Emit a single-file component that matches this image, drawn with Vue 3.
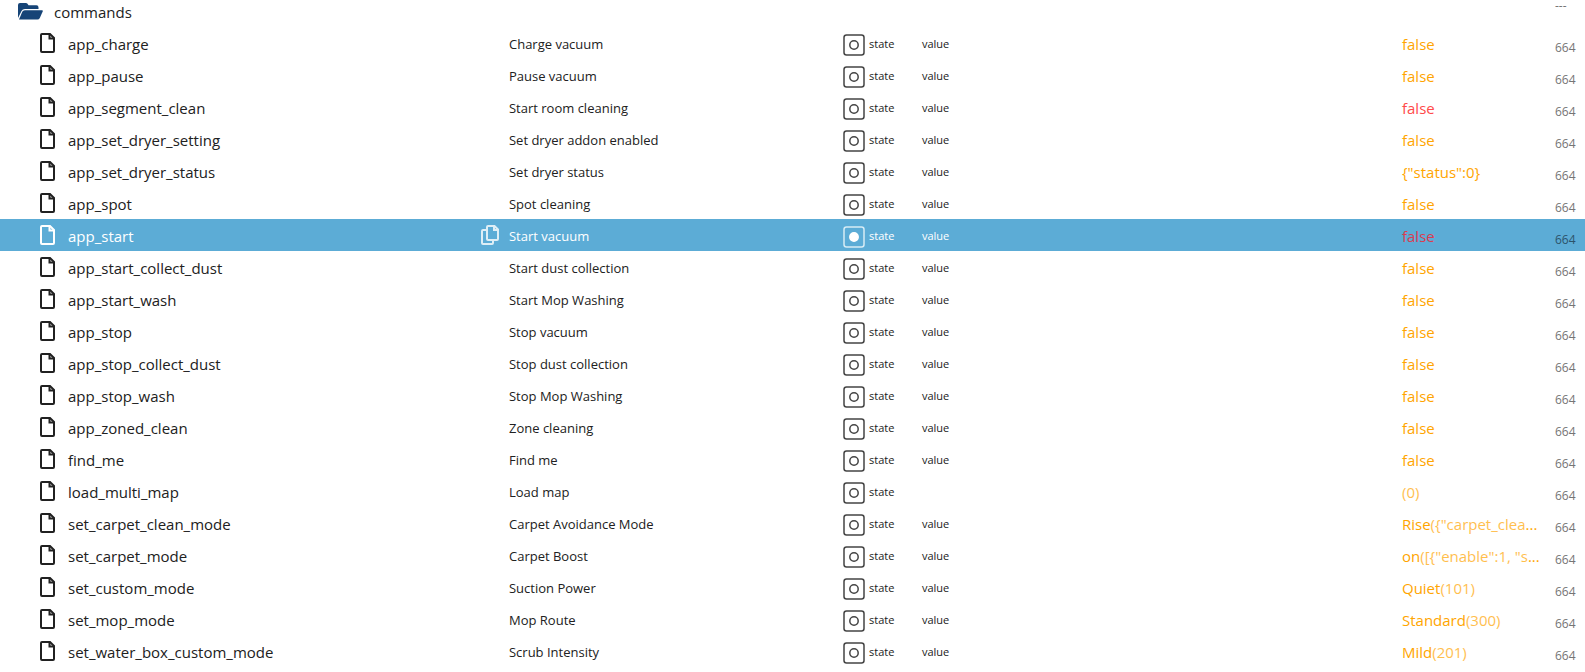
<script setup>
import { ref } from 'vue'

const selected = ref('app_start')

const rows = [
  { id: 'app_charge', desc: 'Charge vacuum', value: 'false' },
  { id: 'app_pause', desc: 'Pause vacuum', value: 'false' },
  { id: 'app_segment_clean', desc: 'Start room cleaning', value: 'false', fresh: true },
  { id: 'app_set_dryer_setting', desc: 'Set dryer addon enabled', value: 'false' },
  { id: 'app_set_dryer_status', desc: 'Set dryer status', value: '{"status":0}' },
  { id: 'app_spot', desc: 'Spot cleaning', value: 'false' },
  { id: 'app_start', desc: 'Start vacuum', value: 'false', fresh: true },
  { id: 'app_start_collect_dust', desc: 'Start dust collection', value: 'false' },
  { id: 'app_start_wash', desc: 'Start Mop Washing', value: 'false' },
  { id: 'app_stop', desc: 'Stop vacuum', value: 'false' },
  { id: 'app_stop_collect_dust', desc: 'Stop dust collection', value: 'false' },
  { id: 'app_stop_wash', desc: 'Stop Mop Washing', value: 'false' },
  { id: 'app_zoned_clean', desc: 'Zone cleaning', value: 'false' },
  { id: 'find_me', desc: 'Find me', value: 'false' },
  { id: 'load_multi_map', desc: 'Load map', raw: '(0)', noRole: true },
  { id: 'set_carpet_clean_mode', desc: 'Carpet Avoidance Mode', value: 'Rise', raw: '({"carpet_clea', cut: true },
  { id: 'set_carpet_mode', desc: 'Carpet Boost', value: 'on', raw: '([{"enable":1, "s', cut: true },
  { id: 'set_custom_mode', desc: 'Suction Power', value: 'Quiet', raw: '(101)' },
  { id: 'set_mop_mode', desc: 'Mop Route', value: 'Standard', raw: '(300)' },
  { id: 'set_water_box_custom_mode', desc: 'Scrub Intensity', value: 'Mild', raw: '(201)' },
]
</script>

<template>
  <table class="tree">
    <colgroup>
      <col class="c-name" />
      <col class="c-copy" />
      <col class="c-desc" />
      <col class="c-type" />
      <col class="c-role" />
      <col class="c-value" />
      <col class="c-acl" />
    </colgroup>
    <tbody>
      <tr class="folder">
        <td colspan="6">
          <div class="name root">
            <svg class="folder-icon" viewBox="0 0 25 17" aria-hidden="true">
              <path d="M0 15V2Q0 0 2 0H8Q9.500 0 10 1.500L10.500 2.300H18.500Q20.500 2.300 20.500 4.500V6H7Q4.500 6 3.500 8Z" />
              <path d="M6.800 7.200H24Q25.200 7.200 24.700 8.500L21.800 15Q21 16.500 19.500 16.500H1L4.300 8.800Q5 7.200 6.800 7.200Z" />
            </svg>
            <span>commands</span>
          </div>
        </td>
        <td class="acl">---</td>
      </tr>
      <tr v-for="r in rows" :key="r.id" :class="{ selected: r.id === selected }" @click="selected = r.id">
        <td>
          <div class="name">
            <svg class="file-icon" viewBox="0 0 15 20" aria-hidden="true">
              <path d="M2 1H10L14 5V18Q14 19 13 19H2Q1 19 1 18V2Q1 1 2 1Z" />
              <path d="M9.500 1.500V5.500H13.500" />
            </svg>
            <span class="label">{{ r.id }}</span>
          </div>
        </td>
        <td>
          <button v-if="r.id === selected" class="copy" type="button" aria-label="Copy">
            <svg viewBox="0 0 18 20" aria-hidden="true">
              <path d="M7 1H13.500L17 4.500V14Q17 15 16 15H7Q6 15 6 14V2Q6 1 7 1Z" />
              <path d="M13 1.500V5H16.500M6 5H2Q1 5 1 6V18Q1 19 2 19H11Q12 19 12 18V15" />
            </svg>
          </button>
        </td>
        <td class="desc">{{ r.desc }}</td>
        <td>
          <div class="type">
            <svg viewBox="0 0 22 22" aria-hidden="true">
              <rect x="1" y="1" width="20" height="20" rx="2.500" />
              <circle cx="11" cy="11" r="4.200" />
            </svg>
            <span>state</span>
          </div>
        </td>
        <td class="role">{{ r.noRole ? '' : 'value' }}</td>
        <td class="value" :class="{ fresh: r.fresh }">{{ r.value }}<span v-if="r.raw" class="raw">{{ r.raw }}</span><span v-if="r.cut">...</span></td>
        <td class="acl">664</td>
      </tr>
    </tbody>
  </table>
</template>

<style>
body {
  margin: 0;
  background: #fff;
}
</style>

<style scoped>
.tree {
  width: 100%;
  table-layout: fixed;
  border-collapse: collapse;
  font-family: "Open Sans", "Noto Sans", sans-serif;
  font-size: 15px;
  line-height: 22px;
  color: #212121;
}
.c-copy { width: 28px; }
.c-desc { width: 334px; }
.c-type { width: 79px; }
.c-role { width: 480px; }
.c-value { width: 153px; }
.c-acl { width: 30px; }

td {
  box-sizing: border-box;
  height: 32px;
  padding: 0;
  vertical-align: middle;
  white-space: nowrap;
}
.folder td {
  height: 27px;
  vertical-align: top;
}
.selected {
  background: #5cacd6;
  color: #fff;
}
.name {
  display: flex;
  align-items: center;
  gap: 13px;
  padding-left: 40px;
}
.label {
  padding-top: 2px;
}
.root {
  gap: 11px;
  padding-left: 18px;
  padding-top: 1px;
}
.file-icon {
  width: 15px;
  height: 20px;
  fill: none;
  stroke: currentColor;
  stroke-width: 2;
}
.folder-icon {
  width: 25px;
  height: 17px;
  margin-bottom: 1px;
  fill: #164477;
}
.copy {
  display: flex;
  padding: 0;
  border: 0;
  background: none;
  color: inherit;
  opacity: 0.8;
  cursor: pointer;
}
.copy svg {
  width: 18px;
  height: 20px;
  fill: none;
  stroke: currentColor;
  stroke-width: 2;
}
td.desc,
td.role,
td.value {
  padding-top: 2px;
}
.desc {
  font-size: 13px;
}
.type {
  display: flex;
  align-items: center;
  gap: 4px;
  padding-top: 4px;
  font-size: 11px;
}
.type span {
  padding-bottom: 3px;
}
.type svg {
  width: 22px;
  height: 22px;
  fill: none;
  stroke: #444;
  stroke-width: 1.500;
}
.selected .type svg {
  stroke: #d6ebf5;
}
.selected circle {
  fill: #fff;
  stroke: #fff;
}
.role {
  font-size: 11px;
}
.value {
  color: #ffa500;
}
.value.fresh {
  color: #ff4a4a;
}
.selected .value.fresh {
  color: #dc3c50;
}
.raw {
  opacity: 0.7;
}
.acl {
  padding-top: 10px;
  font-size: 12px;
  line-height: 20px;
  color: #757575;
}
.folder .acl {
  padding: 0;
  line-height: 12px;
}
.selected .acl {
  color: #2c536a;
}
</style>
